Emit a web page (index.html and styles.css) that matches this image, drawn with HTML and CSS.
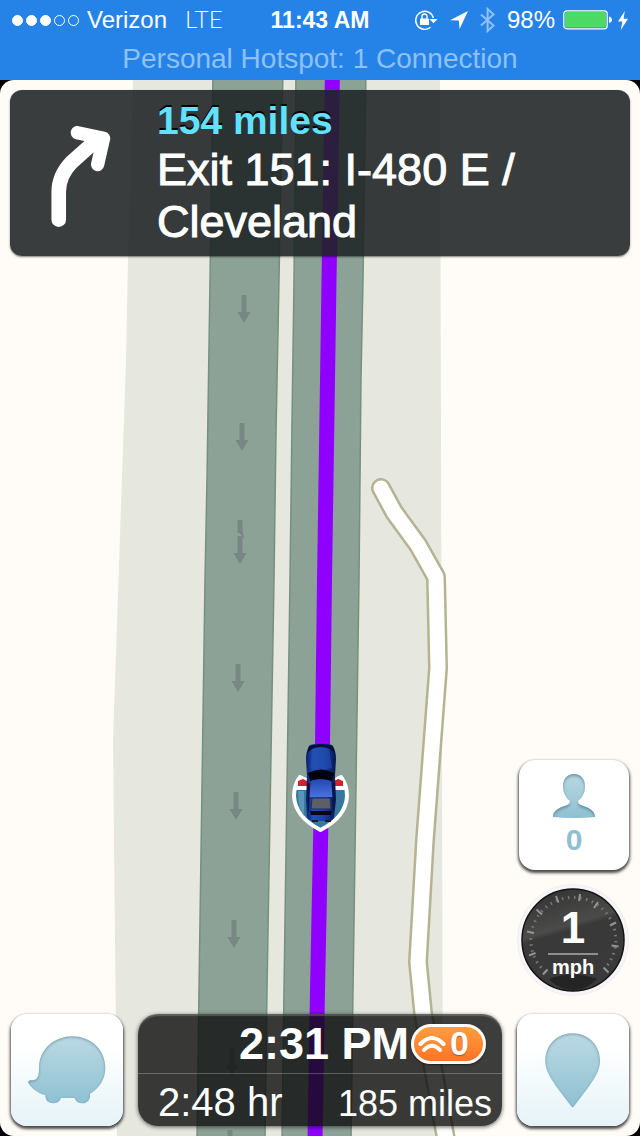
FILE: index.html
```html
<!DOCTYPE html>
<html lang="en">
<head>
    <meta charset="UTF-8">
    <meta name="viewport" content="width=device-width, initial-scale=1.0">
    <title>Navigation</title>
    <link rel="stylesheet" href="styles.css">
</head>
<body>
<header class="status">
    <div class="status-row">
        <div class="status-left">
            <div class="signal">
                <span class="dot full"></span>
                <span class="dot full"></span>
                <span class="dot full"></span>
                <span class="dot"></span>
                <span class="dot"></span>
            </div>
            <span class="carrier">Verizon</span>
            <span class="network">LTE</span>
        </div>
        <time class="clock">11:43 AM</time>
        <div class="status-right">
            <svg width="24" height="22" viewBox="0 0 24 22" fill="none" stroke="#fff" stroke-width="1.4">
                <path d="M16.5 18.2A9 9 0 1 1 19.4 9"/>
                <path d="M15.5 10H23.5L19.5 14.2Z" fill="#fff" stroke="none"/>
                <rect x="6" y="9.5" width="9" height="6.5" rx="0.6" fill="#fff" stroke="none"/>
                <path d="M8 10V7.5a2.5 2.5 0 0 1 5 0V10"/>
            </svg>
            <svg width="18" height="18" viewBox="0 0 18 18"><path d="M0 9.2L18 0L9.6 18L8.8 9.4Z" fill="#fff"/></svg>
            <svg width="15" height="26" viewBox="0 0 15 26" fill="none" stroke="#8fc0f6" stroke-width="2">
                <path d="M1 7.5L13.5 18.5L7.6 24V2L13.5 7.5L1 18.5"/>
            </svg>
            <span class="percent">98%</span>
            <svg width="49" height="20" viewBox="0 0 49 20">
                <rect x="0.8" y="0.8" width="43.4" height="18" rx="3" fill="none" stroke="#fff" stroke-width="1.2"/>
                <rect x="2" y="2" width="41" height="15.6" rx="1.5" fill="#4cd964"/>
                <path d="M46 6.5q3 .8 3 3.3t-3 3.3z" fill="#fff"/>
            </svg>
            <svg class="icon-bolt" width="10" height="19" viewBox="0 0 10 19"><path d="M6.8 0L0 10.4H4.4L2.8 19L10 7.8H5.6Z" fill="#fff"/></svg>
        </div>
    </div>
    <p class="hotspot">Personal Hotspot: 1 Connection</p>
</header>

<main class="map">
    <svg class="map-canvas" viewBox="0 80 640 1056" preserveAspectRatio="xMidYMin slice" aria-hidden="true">
        <defs>
            <path id="lane-arrow" d="M-2.5 0H2.5V17H6.5L0 28L-6.5 17H-2.5Z" fill="#778882"/>
            <linearGradient id="car-body" x1="0" x2="1" y1="0" y2="0">
                <stop offset="0" stop-color="#0a1f6c"/>
                <stop offset="0.25" stop-color="#2450b8"/>
                <stop offset="0.6" stop-color="#1a3fa4"/>
                <stop offset="1" stop-color="#07164f"/>
            </linearGradient>
            <linearGradient id="car-roof" x1="0" x2="0" y1="0" y2="1">
                <stop offset="0" stop-color="#2448b4"/>
                <stop offset="1" stop-color="#4a72de"/>
            </linearGradient>
        </defs>
        <rect x="0" y="80" width="640" height="1056" fill="#fffcf7"/>
        <path d="M133 80L128 256L126 360L113 740L117 1136H443L440 80Z" fill="#e6e7df"/>

        <!-- highway -->
        <g fill="#8ca296" stroke="#769080" stroke-width="1.5">
            <path d="M213 70L210 280L207 478L205 580L199 990L197 1140H265L267 990L274 580L276 433L279 280L283 70Z"/>
            <path d="M296 70L294 280L292 422L290 580L284 990L282 1140H351L353 990L359 580L361 378L363 280L366 70Z"/>
        </g>
        <path d="M332.500 70L329 280L324.500 580L322.500 745L317.500 990L315 1140" fill="none" stroke="#9000ff" stroke-width="15"/>
        <use href="#lane-arrow" x="244" y="295"/>
        <use href="#lane-arrow" x="242" y="423"/>
        <path d="M237.500 520h5v10l2 9-5-6h-2z" fill="#778882"/>
        <use href="#lane-arrow" x="240" y="536"/>
        <use href="#lane-arrow" x="238" y="664"/>
        <use href="#lane-arrow" x="236" y="792"/>
        <use href="#lane-arrow" x="234" y="920"/>
        <use href="#lane-arrow" x="232" y="1048"/>
        <use href="#lane-arrow" x="230" y="1130"/>

        <!-- side road -->
        <g fill="none" stroke-linecap="round" stroke-linejoin="round">
            <path d="M381 488L394 512L418 545L436 577L438 668L425 840L418 962L423 1013L447 1145" stroke="#b5b391" stroke-width="20"/>
            <path d="M381 488L394 512L418 545L436 577L438 668L425 840L418 962L423 1013L447 1145" stroke="#fff" stroke-width="15"/>
        </g>

        <!-- car on its shield -->
        <path d="M300 777Q294 785 294 796Q295 817 320.500 830Q346 817 347 796Q347 785 341 777L335 780H306Z" fill="#37789c" stroke="#fff" stroke-width="4" stroke-linejoin="round"/>
        <path d="M298 781L303 779L307 781V786H298ZM343 781L338 779L334 781V786H343Z" fill="#d3222a"/>
        <path d="M297 786H307V790H296ZM344 786H334V790H345Z" fill="#fff"/>
        <path d="M298 791H304V816Q298 808 298 791Z" fill="#5a96b5"/>
        <path d="M310 745Q321 741 332 745Q336 750 336 759L335 776L336 800L334 817Q333 821 328 821H314Q308 821 307 817L306 800L307 776L306 759Q306 750 310 745Z" fill="url(#car-body)"/>
        <path d="M309 746Q321 742 333 746L335 755Q332 747 321 747T307 755Z" fill="#060f35"/>
        <path d="M313 749Q321 746 329 749L332 768Q321 771 310 768Z" fill="#2350b5" opacity="0.65"/>
        <path d="M308 773Q321 766 334 773L332 781Q321 777 310 781Z" fill="#02030a"/>
        <path d="M311 781Q321 778 331 781L333 797H309Z" fill="url(#car-roof)"/>
        <path d="M307 782L310 784L309 810L308 812ZM335 782L332 784L333 810L334 812Z" fill="#0a1546"/>
        <path d="M312 798H330L331 809H311Z" fill="#5d5f66" stroke="#1b2c70" stroke-width="1"/>
        <path d="M310 811H332L331 815H311Z" fill="#05081c"/>
        <path d="M312 820H318V822H312ZM325 820H331V822H325Z" fill="#1b1b22"/>
    </svg>

    <section class="direction">
        <svg class="turn" width="60" height="101" viewBox="152 137 180 304" fill="none" stroke="#fff" stroke-linecap="round" stroke-linejoin="round">
            <path d="M175 419V335Q175 287 213 247L290 178" stroke-width="44"/>
            <path d="M231 157L310 174L292 253" stroke-width="40"/>
        </svg>
        <div class="direction-text">
            <p class="distance">154 miles</p>
            <p class="road">Exit 151: I-480 E /<br>Cleveland</p>
        </div>
    </section>

    <aside class="side">
        <button class="tile friends" type="button" aria-label="Friends on the road">
            <svg width="42" height="44" viewBox="0 0 42 44">
                <defs>
                    <linearGradient id="glyph" x1="0" x2="0" y1="0" y2="1">
                        <stop offset="0" stop-color="#b9d8e2"/>
                        <stop offset="1" stop-color="#8fc0d1"/>
                    </linearGradient>
                    <filter id="inset" x="-10%" y="-10%" width="120%" height="120%">
                        <feOffset in="SourceAlpha" dy="1.5" result="o"/>
                        <feGaussianBlur in="o" stdDeviation="1.5" result="b"/>
                        <feComposite in="SourceAlpha" in2="b" operator="out" result="edge"/>
                        <feFlood flood-color="#38788c" flood-opacity="0.8"/>
                        <feComposite in2="edge" operator="in" result="tint"/>
                        <feMerge><feMergeNode in="SourceGraphic"/><feMergeNode in="tint"/></feMerge>
                    </filter>
                </defs>
                <path d="M21 0C28 0 32 5 32 12C32 19 29 24 25 27Q25 30 29 31.500C37 34 42 37 42 43Q21 45 0 43C0 37 5 34 13 31.500Q17 30 17 27C13 24 10 19 10 12C10 5 14 0 21 0Z" fill="url(#glyph)" filter="url(#inset)"/>
            </svg>
            <span class="friends-count">0</span>
        </button>
        <div class="gauge">
            <svg class="gauge-face" viewBox="0 0 112 112" aria-hidden="true">
                <defs>
                    <linearGradient id="face" x1="0" x2="0.300" y1="0" y2="1">
                        <stop offset="0" stop-color="#2f302f"/>
                        <stop offset="0.450" stop-color="#4b4c4a"/>
                        <stop offset="0.500" stop-color="#383938"/>
                        <stop offset="1" stop-color="#393a39"/>
                    </linearGradient>
                </defs>
                <circle cx="56" cy="56" r="55.500" fill="#f6f5f8" stroke="#f5ebee"/>
                <circle cx="56" cy="56" r="51" fill="url(#face)" stroke="#131313" stroke-width="1.500"/>
                <path d="M32 95Q56 86 80 95Q70 106 56 106T32 95Z" fill="#232423"/>
                <path d="M28.500 88A42.500 42.500 0 1 1 89 83" fill="none" stroke="#777877" stroke-width="3" stroke-dasharray="1.500 4.600"/>
                <g stroke="#929392" stroke-width="2">
                    <path d="M62 17L63 10M41.500 18.500L39 12M25 30.500L19.500 25.500M17 49L10 47.500M18.500 69L12 71.500M30.500 85.500L26 90.500M77 24L81 18M93 41.500L99 38.500M94.500 61.500L101.500 62.500M86.500 83.500L91.500 88.500"/>
                </g>
            </svg>
            <span class="speed">1</span>
            <span class="unit">mph</span>
        </div>
    </aside>

    <nav class="bottom">
        <button class="tile" type="button" aria-label="Menu">
            <svg width="78" height="68" viewBox="83 134 234 204">
                <path d="M216 135C272 135 315 176 315 229C315 264 297 290 269 307C271 325 260 336 246 336C234 336 226 330 223 320H182C178 331 170 336 159 336C144 336 135 327 135 312C112 305 94 291 84 275Q83 267 91 267C111 267 116 258 116 229C116 176 160 135 216 135Z" fill="url(#waze)" filter="url(#inset-large)"/>
                <defs>
                    <linearGradient id="waze" x1="0" x2="0" y1="0" y2="1">
                        <stop offset="0" stop-color="#bbd9e3"/>
                        <stop offset="1" stop-color="#8fc1d2"/>
                    </linearGradient>
                    <filter id="inset-large" x="-10%" y="-10%" width="120%" height="120%">
                        <feOffset in="SourceAlpha" dy="4" result="o"/>
                        <feGaussianBlur in="o" stdDeviation="5" result="b"/>
                        <feComposite in="SourceAlpha" in2="b" operator="out" result="edge"/>
                        <feFlood flood-color="#38788c" flood-opacity="0.8"/>
                        <feComposite in2="edge" operator="in" result="tint"/>
                        <feMerge><feMergeNode in="SourceGraphic"/><feMergeNode in="tint"/></feMerge>
                    </filter>
                </defs>
            </svg>
        </button>
        <section class="eta">
            <div class="eta-main">
                <span class="arrival">2:31 PM</span>
                <span class="alerts">
                    <svg width="28" height="18" viewBox="0 0 28 18" fill="none" stroke="#fff" stroke-width="4" stroke-linecap="round">
                        <path d="M2.500 9Q14 -3 25.500 9"/>
                        <path d="M6 15Q14 6.500 22 15"/>
                    </svg>
                    <span>0</span>
                </span>
            </div>
            <div class="eta-detail">
                <span class="duration">2:48 hr</span>
                <span class="remaining">185 miles</span>
            </div>
        </section>
        <button class="tile" type="button" aria-label="Pin">
            <svg width="56" height="75" viewBox="135 95 168 225">
                <path d="M218 96C264 96 300 131 300 178C300 215 276 243 222 315Q218 321 214 315C160 243 136 215 136 178C136 131 172 96 218 96Z" fill="url(#waze)" filter="url(#inset-large)"/>
            </svg>
        </button>
    </nav>
</main>
</body>
</html>
```
FILE: styles.css
```css
* {
    box-sizing: border-box;
}

body {
    font-family: "Liberation Sans", Arial, sans-serif;
    margin: 0;
    background: #000;
    color: #fff;
    display: flex;
    flex-direction: column;
    min-height: 100vh;
}

p {
    margin: 0;
}

svg {
    display: block;
    flex-shrink: 0;
}

button {
    border: none;
    padding: 0;
    font-family: inherit;
    cursor: pointer;
}

/* status bar */
.status {
    background: #2583e8;
    white-space: nowrap;
}

.status-row {
    display: grid;
    grid-template-columns: 1fr auto 1fr;
    align-items: center;
    height: 40px;
    padding: 0 12px;
    font-size: 24px;
}

.status-left,
.status-right {
    display: flex;
    align-items: center;
}

.status-left {
    align-items: baseline;
}

.status-right {
    justify-content: flex-end;
    gap: 12px;
}

.signal {
    display: flex;
    align-self: center;
    gap: 3px;
    margin-right: 8px;
}

.dot {
    width: 11px;
    height: 11px;
    border: 1px solid #fff;
    border-radius: 50%;
}

.dot.full {
    background: #fff;
}

.network {
    margin-left: 18px;
    font-family: Lato, "Liberation Sans", sans-serif;
    font-weight: 300;
    line-height: 24px;
}

.clock {
    font-size: 23px;
    font-weight: bold;
}

.percent {
    margin-right: -4px;
}

.icon-bolt {
    margin-left: -6px;
}

.hotspot {
    height: 40px;
    line-height: 38px;
    font-size: 28px;
    text-align: center;
    color: #8fc0f6;
}

/* map */
.map {
    position: relative;
    flex: 1;
    display: flex;
    flex-direction: column;
    padding: 10px;
    border-radius: 14px;
    overflow: hidden;
}

.map-canvas {
    position: absolute;
    inset: 0;
    width: 100%;
    height: 100%;
}

.direction,
.side,
.bottom {
    position: relative;
}

.direction {
    display: flex;
    align-items: center;
    gap: 46px;
    padding: 7px 40px 8px 41px;
    border-radius: 12px;
    background: rgba(30, 34, 36, 0.88);
    box-shadow: 0 1px 2px rgba(0, 0, 0, 0.5);
}

.turn {
    margin-top: 8px;
}

.distance {
    font-size: 39px;
    line-height: 47px;
    font-weight: bold;
    color: #62e1ff;
    text-shadow: 0 -2px 0 #000;
}

.road {
    font-size: 45px;
    line-height: 52px;
    -webkit-text-stroke: 1px #fff;
}

.side {
    display: flex;
    flex-direction: column;
    align-items: flex-end;
    gap: 14px;
    margin-top: auto;
    padding: 0 1px 18px;
}

.tile {
    display: flex;
    align-items: center;
    justify-content: center;
    height: 112px;
    border-radius: 16px;
    background: linear-gradient(#fff 30%, #e5f3f8);
    box-shadow: 0 2px 3px 1px rgba(0, 0, 0, 0.7);
}

.friends {
    flex-direction: column;
    gap: 6px;
    width: 110px;
    height: 110px;
    background: #fff;
}

.friends-count {
    font-size: 30px;
    line-height: 32px;
    font-weight: bold;
    color: #8fc0d1;
}

.gauge {
    position: relative;
    display: flex;
    flex-direction: column;
    align-items: center;
    width: 112px;
    height: 112px;
    padding-top: 19px;
    font-weight: bold;
}

.gauge-face {
    position: absolute;
    inset: 0;
}

.speed,
.unit {
    position: relative;
}

.speed {
    width: 50px;
    border-bottom: 2px solid #8d8e8d;
    font-size: 44px;
    line-height: 50px;
    text-align: center;
}

.unit {
    font-size: 20px;
    line-height: 24px;
}

/* bottom bar */
.bottom {
    display: grid;
    grid-template-columns: 112px 1fr 112px;
    gap: 15px;
    padding: 0 1px;
}

.eta {
    border-radius: 20px;
    background: rgba(12, 12, 12, 0.8);
    box-shadow: inset 0 2px 1px rgba(255, 255, 255, 0.2), 0 1px 4px rgba(0, 0, 0, 0.6);
    white-space: nowrap;
}

.eta-main {
    display: flex;
    align-items: center;
    justify-content: flex-end;
    gap: 2px;
    height: 60px;
    padding-right: 16px;
    border-bottom: 1px solid rgba(255, 255, 255, 0.25);
}

.arrival {
    font-size: 45px;
    font-weight: bold;
}

.alerts {
    display: flex;
    align-items: center;
    gap: 4px;
    width: 75px;
    height: 40px;
    padding-left: 4px;
    border: 3px solid #fff;
    border-radius: 20px;
    background: linear-gradient(#ff9d3f, #ff7426);
    box-shadow: 0 1px 2px rgba(0, 0, 0, 0.5);
    font-size: 34px;
    font-weight: bold;
    text-shadow: 0 1px 1px rgba(120, 50, 0, 0.6);
}

.eta-detail {
    display: flex;
    align-items: baseline;
    justify-content: space-between;
    padding: 6px 10px 0 20px;
}

.duration {
    font-size: 40px;
}

.remaining {
    font-size: 36px;
}
```
